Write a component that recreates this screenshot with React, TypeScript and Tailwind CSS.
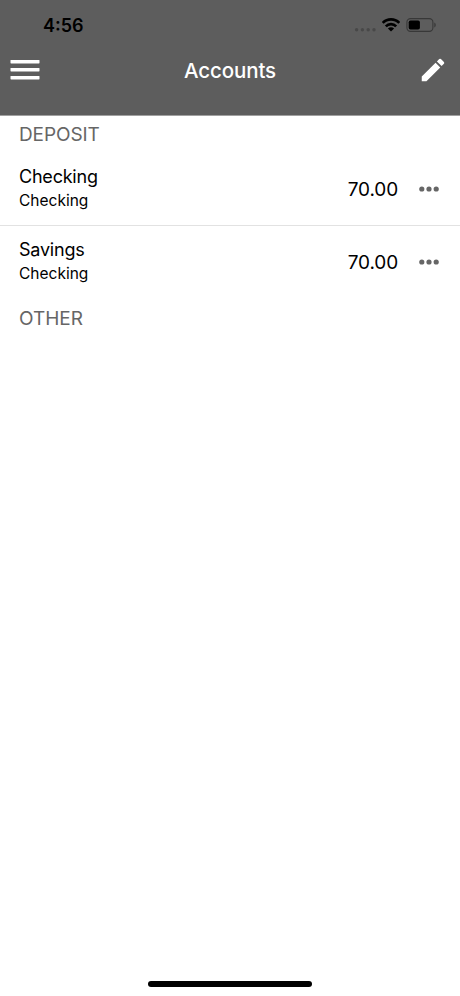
import React from "react";

const accounts = [
  { name: "Checking", type: "Checking", balance: "70.00" },
  { name: "Savings", type: "Checking", balance: "70.00" },
];

function StatusBar() {
  return (
    <div className="flex h-[50px] items-center justify-between pl-[43px] pr-6">
      <span className="pt-[2px] text-[18px] leading-6 font-semibold">4:56</span>
      <div className="flex items-center">
        <svg width="22" height="14" viewBox="0 0 22 14" fill="#484848">
          <circle cx="2.6" cy="11.8" r="1.7" />
          <circle cx="8.4" cy="11.8" r="1.7" />
          <circle cx="14.2" cy="11.8" r="1.7" />
          <circle cx="20" cy="11.8" r="1.7" />
        </svg>
        <svg className="ml-[6px]" width="18" height="14" viewBox="0 0 18 14" fill="none" stroke="#000" strokeWidth="2.7">
          <path d="M0.7 4.9 C5.2 0.2 12.8 0.2 17.3 4.9" />
          <path d="M3.8 8.4 C6.7 5.4 11.3 5.4 14.2 8.4" />
          <path d="M9 13.5 L5.9 10.4 C7.7 8.8 10.3 8.8 12.1 10.4 Z" fill="#000" stroke="none" />
        </svg>
        <svg className="ml-[6px]" width="30" height="14" viewBox="0 0 30 14" fill="none">
          <rect x="0.9" y="0.6" width="26" height="12.8" rx="3.6" stroke="#383838" strokeWidth="1.1" />
          <rect x="2.7" y="2.4" width="11.2" height="9.2" rx="1.8" fill="#000" />
          <path d="M28.3 4.6 C30.2 5.4 30.2 8.6 28.3 9.4 Z" fill="#383838" />
        </svg>
      </div>
    </div>
  );
}

function NavBar() {
  return (
    <div className="flex h-[40px] items-center justify-between pl-[10px] pr-3 text-white">
      <button aria-label="Menu" className="w-[32px]">
        <svg width="30" height="22" viewBox="0 0 30 22" fill="#fff">
          <rect x="0.5" y="1" width="29" height="3.4" rx="0.6" />
          <rect x="0.5" y="9" width="29" height="3.4" rx="0.6" />
          <rect x="0.5" y="17" width="29" height="3.4" rx="0.6" />
        </svg>
      </button>
      <h1 className="pt-[2px] text-[20.5px] leading-6 font-medium tracking-[-0.1px]">
        Accounts
      </h1>
      <button aria-label="Edit">
        <svg width="30" height="30" viewBox="0 0 24 24" fill="#fff">
          <path d="M3 17.25V21h3.75L17.81 9.94l-3.75-3.75L3 17.25zM20.71 7.04a1 1 0 0 0 0-1.41l-2.34-2.34a1 1 0 0 0-1.41 0l-1.83 1.83 3.75 3.75 1.83-1.83z" />
        </svg>
      </button>
    </div>
  );
}

export default function App() {
  return (
    <div className="flex h-screen w-full flex-col bg-white font-['Inter',sans-serif] text-black">
      <header className="h-[116px] border-b border-[#a0a0a0] bg-[#5d5d5d]">
        <StatusBar />
        <NavBar />
      </header>

      <main className="flex-1">
        <h2 className="flex h-[36px] items-center pt-[2px] pl-[19px] text-[19px] tracking-[-0.1px] text-[#666]">
          DEPOSIT
        </h2>
        <ul>
          {accounts.map((account, index) => (
            <li
              key={index}
              className={`flex items-center justify-between pl-[19px] pr-[20px] ${
                index !== accounts.length - 1
                  ? "h-[74px] border-b border-[#e2e2e2]"
                  : "h-[72px]"
              }`}
            >
              <div className="pb-px">
                <p className="text-[18px] leading-[24px] tracking-[-0.22px]">
                  {account.name}
                </p>
                <p className="text-[15.5px] leading-[23px]">{account.type}</p>
              </div>
              <div className="flex items-center gap-[21px]">
                <span className="pt-[2px] text-[19px] leading-6 tracking-[-0.15px]">
                  {account.balance}
                </span>
                <svg width="21" height="6" viewBox="0 0 21 6" fill="#666">
                  <circle cx="2.8" cy="3" r="2.6" />
                  <circle cx="10" cy="3" r="2.6" />
                  <circle cx="17.2" cy="3" r="2.6" />
                </svg>
              </div>
            </li>
          ))}
        </ul>
        <h2 className="flex h-[40px] items-center pt-[2px] pl-[19px] text-[19px] text-[#666]">
          OTHER
        </h2>
      </main>

      <footer className="flex justify-center pb-[9px]">
        <div className="h-[6px] w-[164px] rounded-full bg-black" />
      </footer>
    </div>
  );
}
